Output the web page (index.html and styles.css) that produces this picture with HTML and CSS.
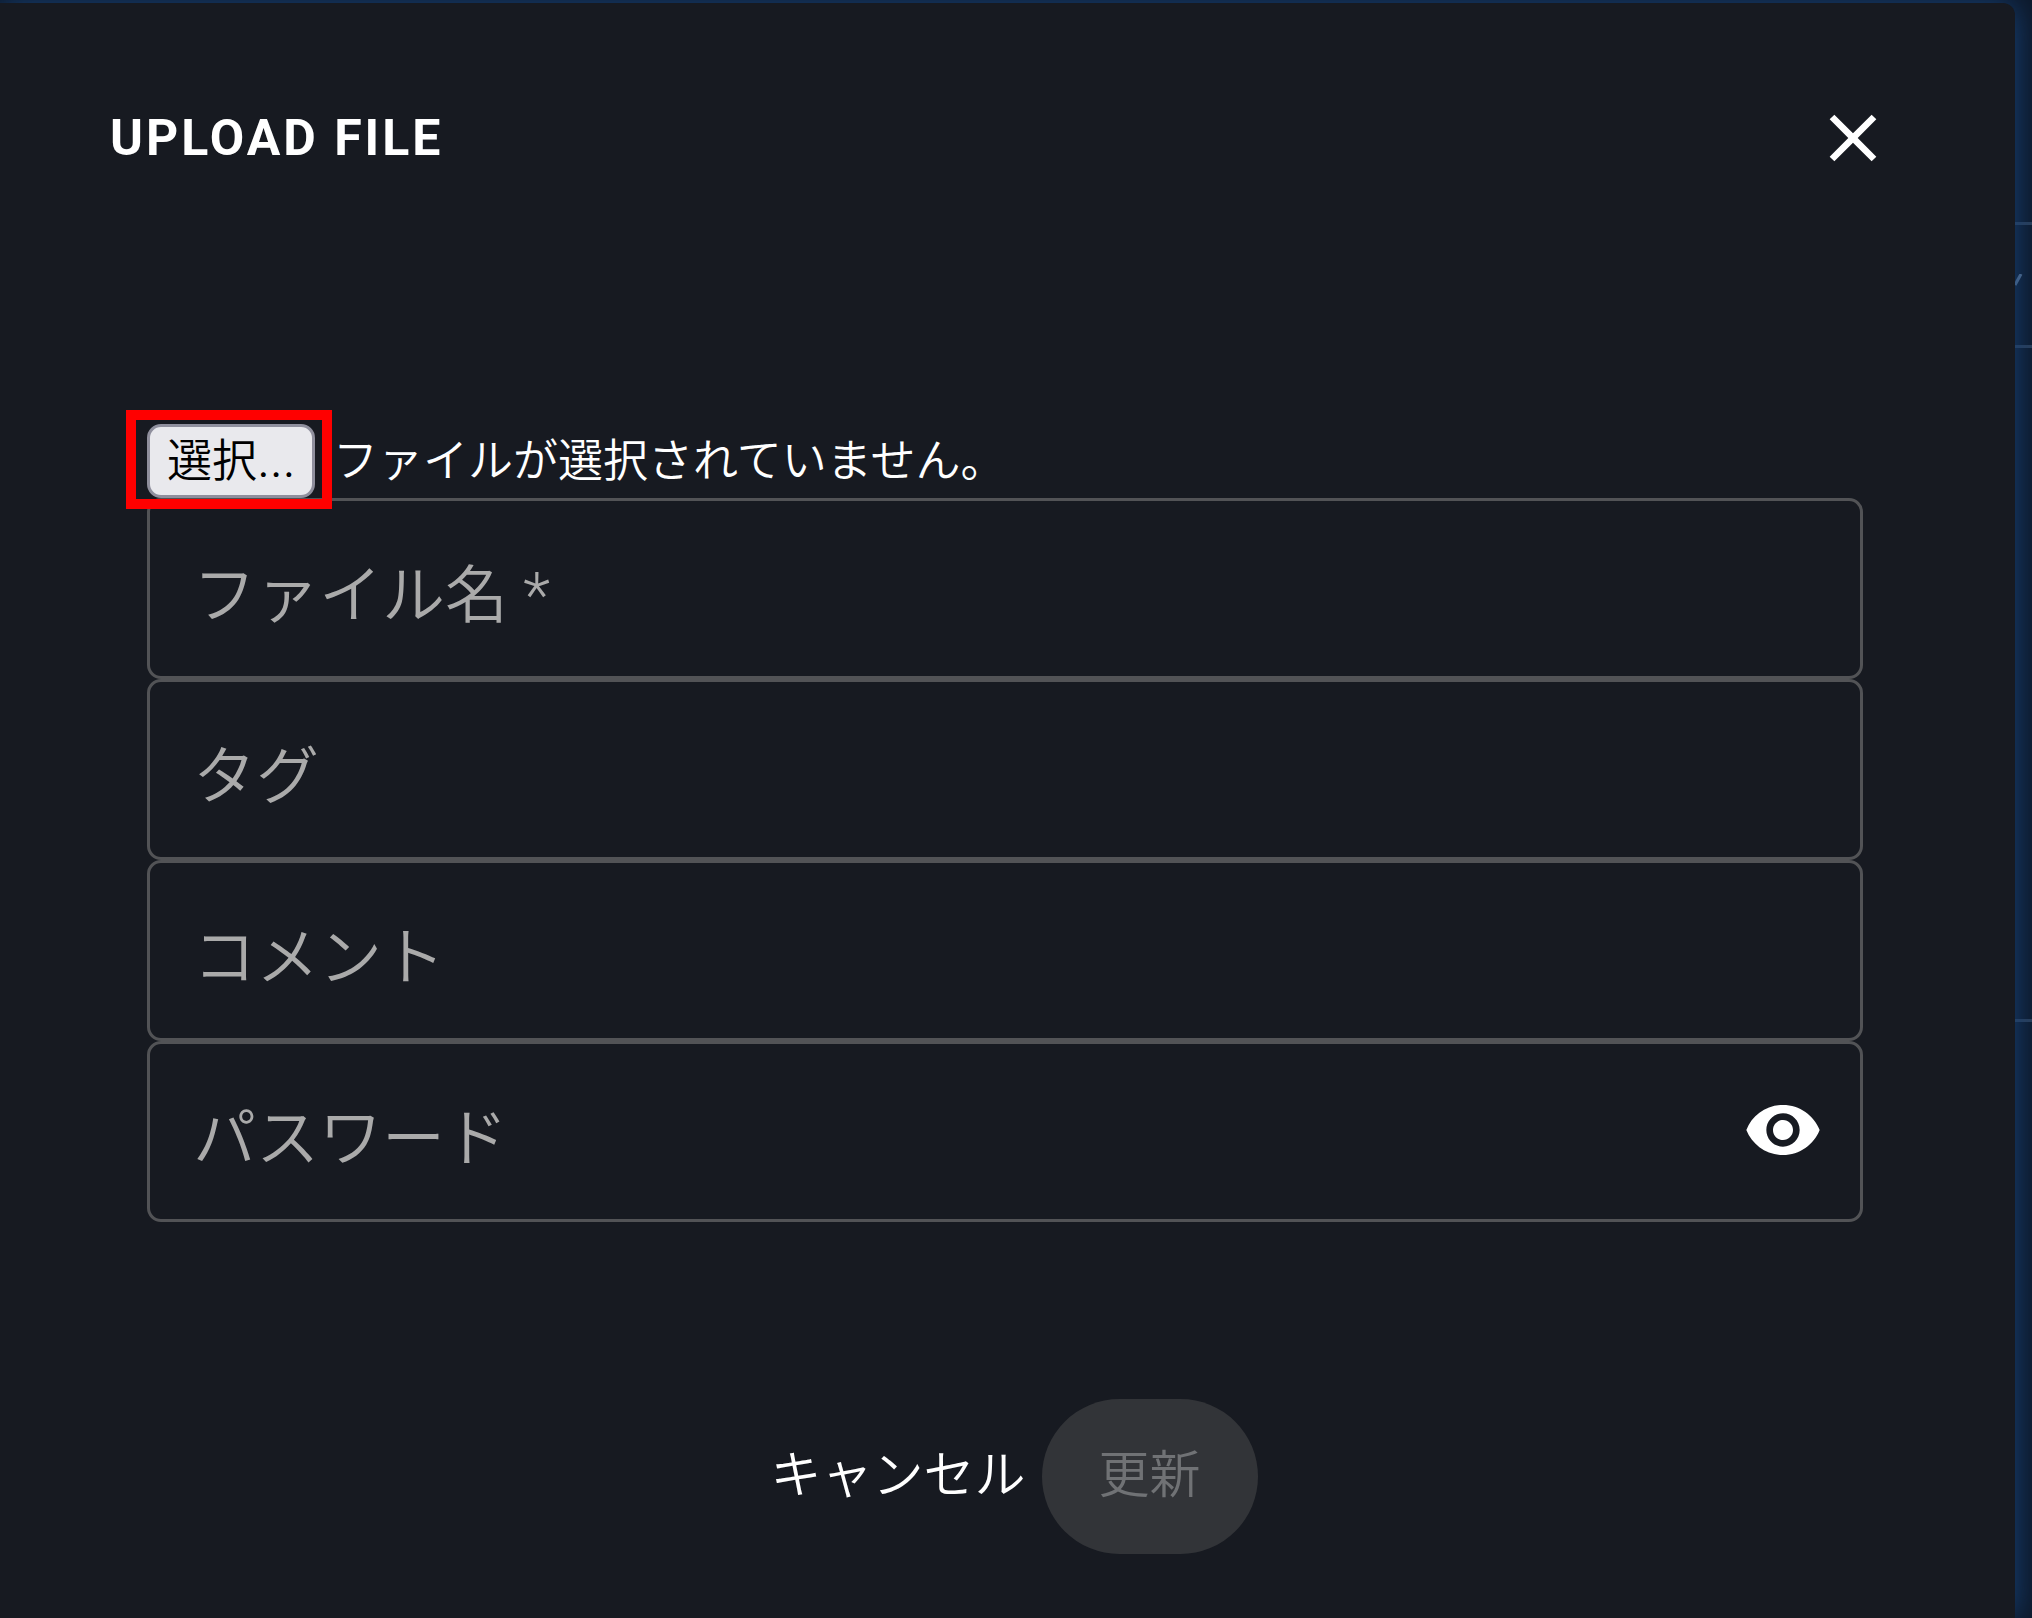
FILE: index.html
```html
<!DOCTYPE html>
<html lang="ja">
<head>
<meta charset="utf-8">
<meta name="viewport" content="width=device-width, initial-scale=1">
<title>Upload File</title>
<link rel="stylesheet" href="styles.css">
</head>
<body>
<div class="backdrop" aria-hidden="true">
  <div class="backdrop-row row-top"></div>
  <div class="backdrop-row row-tools">
    <svg class="backdrop-mark" viewBox="0 0 8 12"><path d="M0 11L6 0" fill="none" stroke="#5c7391" stroke-width="3"/></svg>
  </div>
  <div class="backdrop-row row-list"></div>
</div>
<main class="dialog" role="dialog" aria-labelledby="dialog-title">
  <header class="dialog-header">
    <h1 class="dialog-title" id="dialog-title">UPLOAD FILE</h1>
    <button class="icon-button" type="button" aria-label="閉じる">
      <svg class="icon" viewBox="0 0 24 24"><path d="M19 6.41 17.59 5 12 10.59 6.41 5 5 6.41 10.59 12 5 17.59 6.41 19 12 13.41 17.59 19 19 17.59 13.41 12z"/></svg>
    </button>
  </header>
  <form class="dialog-form">
    <div class="file-row">
      <input class="file-input" type="file" id="file">
      <span class="file-pick">
        <label class="file-button" for="file">選択...</label>
        <span class="highlight"></span>
      </span>
      <span class="file-status">ファイルが選択されていません。</span>
    </div>
    <div class="field">
      <input class="field-input" type="text" id="name" aria-label="ファイル名" placeholder="ファイル名 *" required>
    </div>
    <div class="field">
      <input class="field-input" type="text" id="tag" aria-label="タグ" placeholder="タグ">
    </div>
    <div class="field">
      <input class="field-input" type="text" id="comment" aria-label="コメント" placeholder="コメント">
    </div>
    <div class="field">
      <input class="field-input" type="password" id="password" aria-label="パスワード" placeholder="パスワード">
      <button class="icon-button" type="button" aria-label="パスワードを表示">
        <svg class="icon" viewBox="0 0 24 24"><path d="M12 4.5C7 4.5 2.73 7.61 1 12c1.73 4.39 6 7.5 11 7.5s9.27-3.11 11-7.5c-1.73-4.39-6-7.5-11-7.5M12 17c-2.76 0-5-2.24-5-5s2.24-5 5-5 5 2.24 5 5-2.24 5-5 5m0-8c-1.66 0-3 1.34-3 3s1.34 3 3 3 3-1.34 3-3-1.34-3-3-3"/></svg>
      </button>
    </div>
    <div class="actions">
      <button class="cancel" type="button">キャンセル</button>
      <button class="submit" type="submit" disabled>更新</button>
    </div>
  </form>
</main>
</body>
</html>
```

FILE: styles.css
```css
* {
  box-sizing: border-box;
}

body {
  margin: 0;
  min-height: 100vh;
  display: flex;
  flex-direction: column;
  padding: 3px 17px 0 0;
  overflow: hidden;
  background: #0d1829;
  color: #fff;
  font-family: Roboto, "Noto Sans CJK JP", sans-serif;
}

button,
input {
  font: inherit;
}

/* Page content behind the dialog */
.backdrop {
  position: absolute;
  inset: 0;
  overflow: hidden;
}

.backdrop-row {
  border-bottom: 3px solid #2b3d56;
}

.row-top {
  height: 225px;
}

.row-tools {
  height: 123px;
  display: flex;
  align-items: center;
  justify-content: flex-end;
  padding: 0 9px 10px 0;
}

.backdrop-mark {
  width: 8px;
  height: 12px;
}

.row-list {
  height: 674px;
}

.dialog {
  position: relative;
  flex: 1;
  padding: 95px 138px 0 110px;
  border-radius: 0 12px 0 0;
  background: #171a21;
  box-shadow: 0 0 32px #18457c;
}

.dialog-header {
  display: flex;
  align-items: center;
  justify-content: space-between;
  height: 80px;
  margin-right: -16px;
}

.dialog-title {
  margin: 0;
  font-size: 50px;
  font-weight: 700;
  letter-spacing: 3px;
}

.icon-button {
  flex: none;
  display: block;
  padding: 0;
  border: 0;
  background: none;
}

.icon {
  display: block;
  width: 80px;
  height: 80px;
  fill: #fff;
}

.dialog-form {
  margin: 246px 14px 0 37px;
}

.file-row {
  display: flex;
  align-items: center;
  gap: 18px;
  height: 74px;
  font-family: Inter, "Noto Sans CJK JP", sans-serif;
  font-size: 45px;
  font-weight: 350;
  line-height: 68px;
}

.file-input {
  position: absolute;
  width: 1px;
  height: 1px;
  opacity: 0;
}

.file-pick {
  position: relative;
}

.file-button {
  display: block;
  padding: 0 17px;
  border: 3px solid #8f8f9d;
  border-radius: 14px;
  background: #e9e9ed;
  color: #000;
}

/* Marks the control to click */
.highlight {
  position: absolute;
  inset: -14px -17px -11px -21px;
  z-index: 1;
  border: 10px solid #f00;
  pointer-events: none;
}

.field {
  display: flex;
  align-items: center;
  height: 181px;
  padding: 0 37px 4px 43px;
  border: 3px solid #525356;
  border-radius: 14px;
}

.field-input {
  flex: 1;
  min-width: 0;
  height: 100%;
  padding: 18px 0 0;
  border: 0;
  outline: 0;
  background: none;
  color: #fff;
  font-size: 63px;
  font-weight: 350;
}

.field-input::placeholder {
  color: #aaa;
  opacity: 1;
}

.actions {
  display: flex;
  justify-content: center;
  gap: 4px;
  margin: 177px -6px 0 0;
  font-size: 51px;
  font-weight: 350;
}

.cancel,
.submit {
  height: 155px;
  border: 0;
  border-radius: 78px;
}

.cancel {
  padding: 0 12px 12px;
  background: none;
  color: #fff;
}

.submit {
  padding: 0 57px 12px;
  background: #323438;
  color: #707275;
}
```
